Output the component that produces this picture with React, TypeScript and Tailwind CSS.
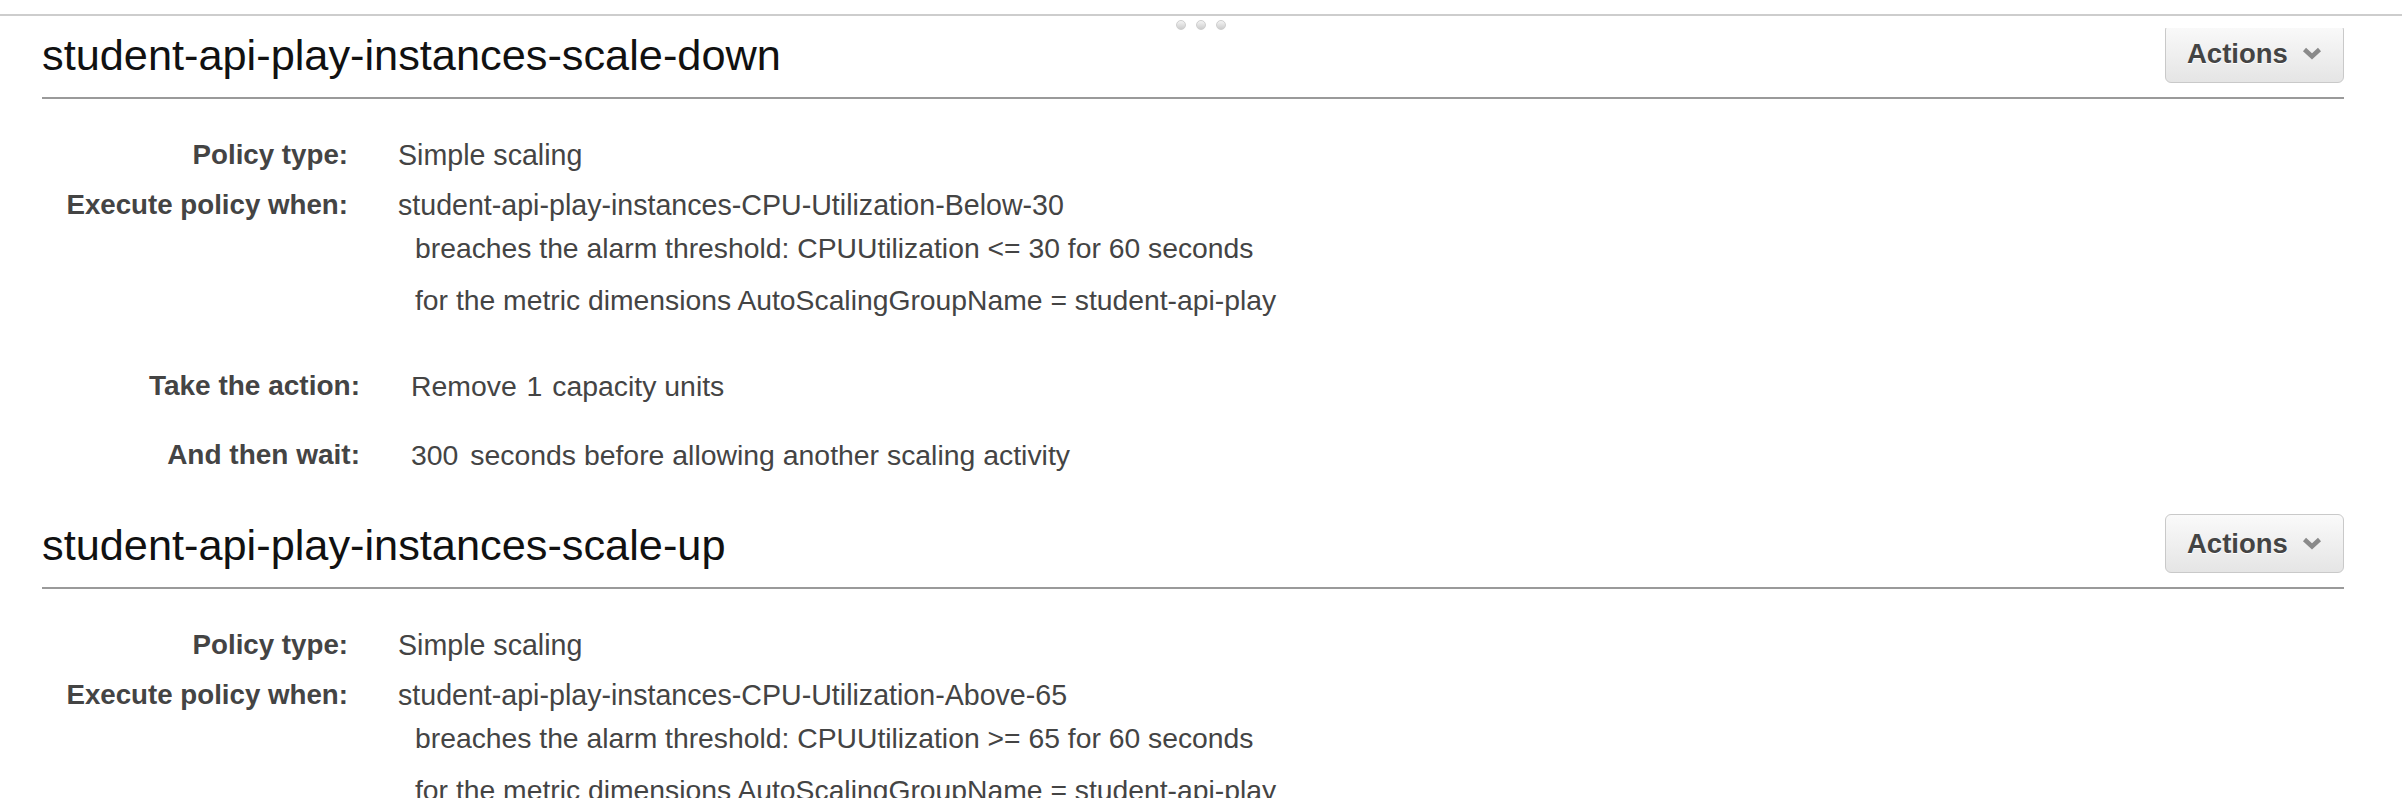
import React from "react";

type Row = { label: string; value: React.ReactNode };

function Chevron() {
  return (
    <svg width="20" height="13" viewBox="0 0 20 13" className="ml-[14px]">
      <polyline points="2.5,2.5 10,9.5 17.5,2.5" fill="none" stroke="#8a8a8a" strokeWidth="4.5" strokeLinejoin="miter" />
    </svg>
  );
}

function ActionsButton() {
  return (
    <button className="flex h-[59px] w-[179px] items-center rounded-[6px] border border-[#c9c9c9] bg-gradient-to-b from-[#fafafa] to-[#e5e5e5] pl-[21px] text-[27.5px] font-bold text-[#444] [text-shadow:0_1px_0_#fff]">
      Actions
      <Chevron />
    </button>
  );
}

function Table({ rows, labelWidth, gap }: { rows: Row[]; labelWidth: string; gap: string }) {
  return (
    <div className="flex flex-col gap-[16px]">
      {rows.map((r) => (
        <div key={r.label} className="flex">
          <div className={`${labelWidth} shrink-0 text-right text-[27.7px] leading-[34px] font-bold text-[#444]`}>{r.label}</div>
          <div className={`${gap} text-[28.6px] leading-[34px] text-[#444]`}>{r.value}</div>
        </div>
      ))}
    </div>
  );
}

function Policy({ name, alarm, op, threshold, action, adj }: {
  name: string;
  alarm: string;
  op: string;
  threshold: string;
  action: string;
  adj: string;
}) {
  return (
    <section>
      <div className="border-b-2 border-[#9a9a9a] pb-[14px]">
        <div className="flex h-[59px] items-center justify-between">
          <h2 className="mt-[3px] text-[43.3px] leading-[50px] font-normal text-[#111]">{name}</h2>
          <ActionsButton />
        </div>
      </div>

      <div className="mt-[39px]">
        <Table
          labelWidth="w-[306px]"
          gap="ml-[50px]"
          rows={[
            { label: "Policy type:", value: "Simple scaling" },
            { label: "Execute policy when:", value: alarm },
          ]}
        />
      </div>
      <div className="ml-[373px] text-[28.3px] leading-[34px] text-[#444]">
        <div className="mt-[9px]">breaches the alarm threshold: CPUUtilization {op} {threshold} for 60 seconds</div>
        <div className="mt-[18px]">for the metric dimensions AutoScalingGroupName = student-api-play</div>
      </div>

      <div className="mt-[52px] flex flex-col gap-[35px]">
        <div className="flex">
          <div className="w-[318px] shrink-0 text-right text-[28px] leading-[34px] font-bold text-[#444]">Take the action:</div>
          <div className="ml-[51px] text-[28.4px] leading-[34px] text-[#444]">
            {action} <span className="mx-[2px]">{adj}</span> capacity units
          </div>
        </div>
        <div className="flex">
          <div className="w-[318px] shrink-0 text-right text-[28px] leading-[34px] font-bold text-[#444]">And then wait:</div>
          <div className="ml-[51px] text-[28.4px] leading-[34px] text-[#444]">
            300 <span className="ml-[4px]">seconds before allowing another scaling activity</span>
          </div>
        </div>
      </div>
    </section>
  );
}

export default function App() {
  return (
    <div className="h-[798px] w-[2402px] overflow-hidden bg-white font-['Liberation_Sans',Arial,sans-serif]">
      <div className="relative h-[28px]">
        <div className="h-[14px]" />
        <div className="h-[2px] bg-[#cdcdcd]" />
        <div className="mt-[4px] flex justify-center gap-[10px]">
          {[0, 1, 2].map((i) => (
            <span key={i} className="h-[10px] w-[10px] rounded-full border border-[#cfcfcf] bg-gradient-to-b from-[#f4f4f4] to-[#cdcdcd]" />
          ))}
        </div>
      </div>

      <div className="h-[770px] overflow-hidden">
        <div className="-mt-[4px] flex flex-col gap-[42px] pl-[42px] pr-[58px]">
          <Policy
            name="student-api-play-instances-scale-down"
            alarm="student-api-play-instances-CPU-Utilization-Below-30"
            op="<="
            threshold="30"
            action="Remove"
            adj="1"
          />
          <Policy
            name="student-api-play-instances-scale-up"
            alarm="student-api-play-instances-CPU-Utilization-Above-65"
            op=">="
            threshold="65"
            action="Add"
            adj="1"
          />
        </div>
      </div>
    </div>
  );
}
